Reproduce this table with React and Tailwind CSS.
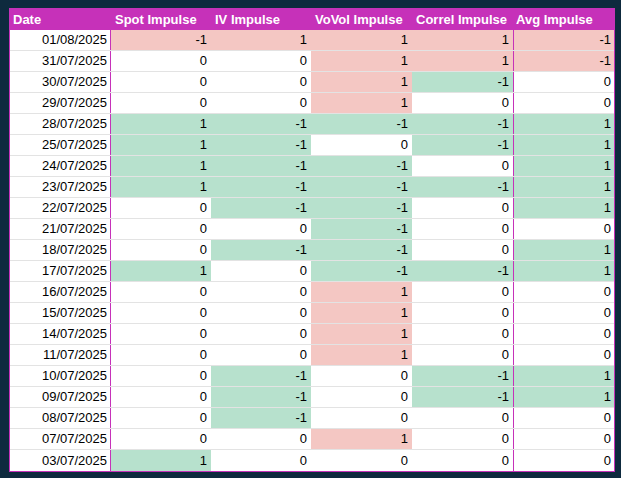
import React from 'react';

const P = 'bg-[#f4c7c3]';
const G = 'bg-[#b7e1cd]';
const W = 'bg-white';

// colour per column per value
const colour = [
  { '1': G, '-1': P, '0': W }, // spot
  { '1': P, '-1': G, '0': W }, // iv
  { '1': P, '-1': G, '0': W }, // vovol
  { '1': P, '-1': G, '0': W }, // correl
  { '1': G, '-1': P, '0': W }, // avg
];

const rows = [
  ['01/08/2025', -1, 1, 1, 1, -1],
  ['31/07/2025', 0, 0, 1, 1, -1],
  ['30/07/2025', 0, 0, 1, -1, 0],
  ['29/07/2025', 0, 0, 1, 0, 0],
  ['28/07/2025', 1, -1, -1, -1, 1],
  ['25/07/2025', 1, -1, 0, -1, 1],
  ['24/07/2025', 1, -1, -1, 0, 1],
  ['23/07/2025', 1, -1, -1, -1, 1],
  ['22/07/2025', 0, -1, -1, 0, 1],
  ['21/07/2025', 0, 0, -1, 0, 0],
  ['18/07/2025', 0, -1, -1, 0, 1],
  ['17/07/2025', 1, 0, -1, -1, 1],
  ['16/07/2025', 0, 0, 1, 0, 0],
  ['15/07/2025', 0, 0, 1, 0, 0],
  ['14/07/2025', 0, 0, 1, 0, 0],
  ['11/07/2025', 0, 0, 1, 0, 0],
  ['10/07/2025', 0, -1, 0, -1, 1],
  ['09/07/2025', 0, -1, 0, -1, 1],
  ['08/07/2025', 0, -1, 0, 0, 0],
  ['07/07/2025', 0, 0, 1, 0, 0],
  ['03/07/2025', 1, 0, 0, 0, 0],
];

const widths = ['w-[100px]', 'w-[100px]', 'w-[101px]', 'w-[101px]', 'w-[100px]'];
const headers = ['Spot Impulse', 'IV Impulse', 'VoVol Impulse', 'Correl Impulse', 'Avg Impulse'];

export default function App() {
  return (
    <div
      className="h-[478px] w-[621px] bg-[#0e2a3e] pl-[9px] pt-[8px]"
      style={{ fontFamily: '"Liberation Sans", Arial, sans-serif' }}
    >
      <div className="w-[606px] border border-[#c631b9] bg-white text-[13px] text-black">
        {/* header */}
        <div className="flex h-[21px] items-center bg-[#c631b9] font-bold text-white">
          <div className="w-[101px] pl-[3px]">Date</div>
          {headers.map((h, i) => (
            <div key={h} className={`${i === 4 ? 'w-[100px] pl-[2px]' : widths[i] + ' pl-[4px]'}`}>
              {i === 4 ? <span className="pl-[1px]">{h}</span> : h}
            </div>
          ))}
        </div>

        {rows.map((r, ri) => (
          <div
            key={r[0]}
            className={`flex h-[21px] ${ri < rows.length - 1 ? 'border-b border-[#e3e3e3]' : ''}`}
          >
            <div className="flex w-[100px] items-center justify-end pr-[3px]">{r[0]}</div>
            <div className="w-px bg-[#c631b9]" />
            {r.slice(1, 5).map((v, ci) => (
              <div
                key={ci}
                className={`flex ${widths[ci]} items-center justify-end pr-[4px] ${colour[ci][String(v)]}`}
              >
                {v}
              </div>
            ))}
            <div className="w-px bg-[#c631b9]" />
            <div className={`flex w-[100px] items-center justify-end pr-[3px] ${colour[4][String(r[5])]}`}>
              {r[5]}
            </div>
          </div>
        ))}
      </div>
    </div>
  );
}
